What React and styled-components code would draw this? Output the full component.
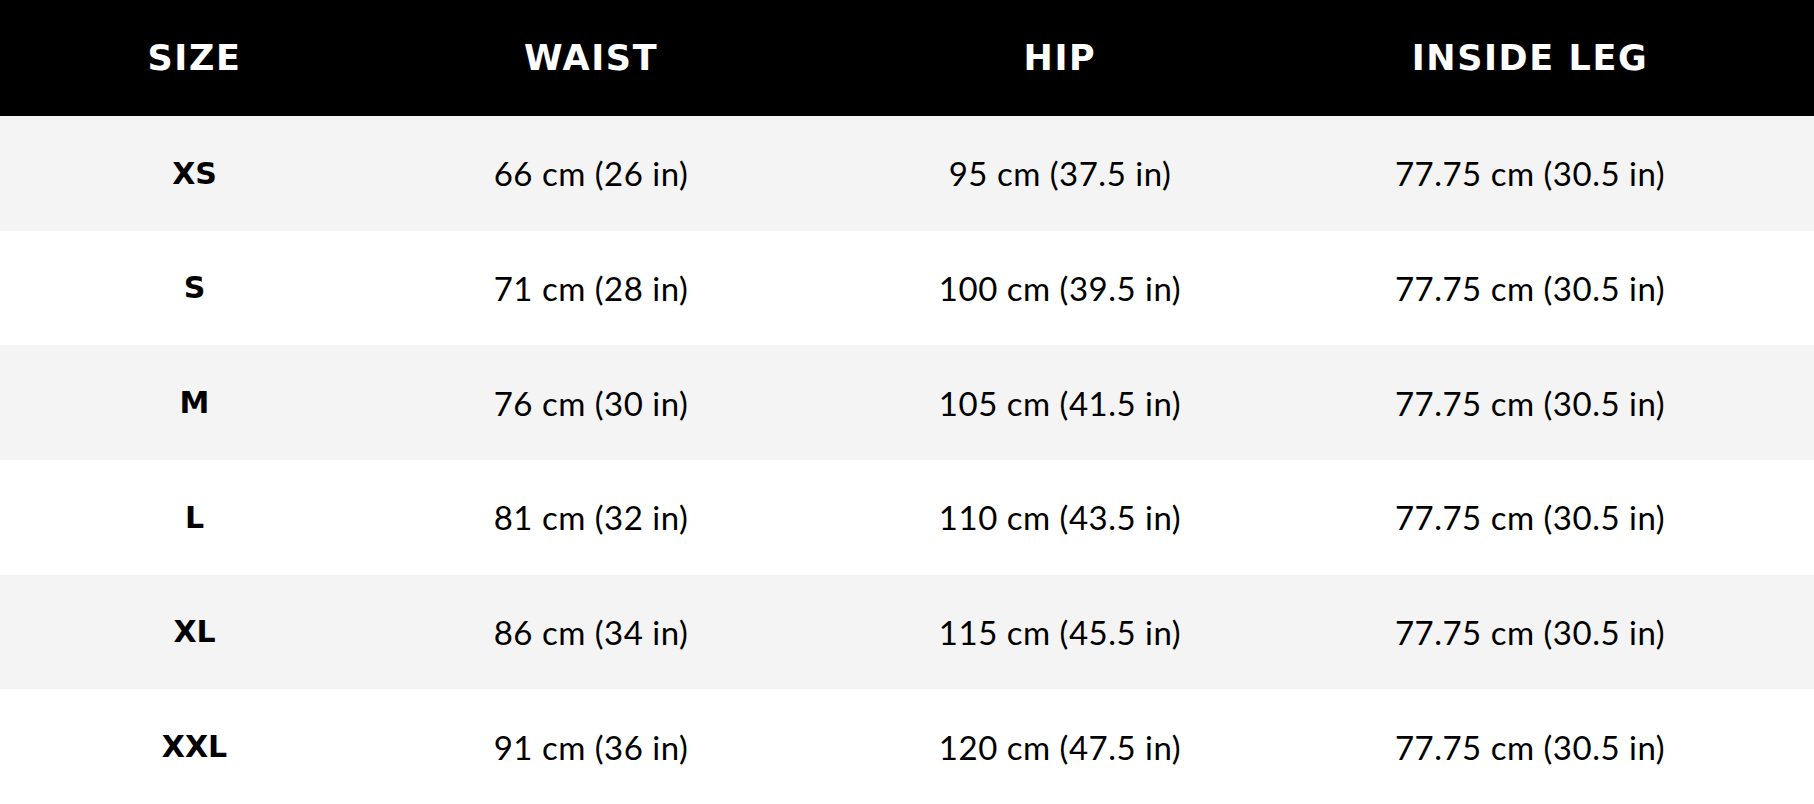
import React from 'react';
import styled, { createGlobalStyle } from 'styled-components';

const GlobalStyle = createGlobalStyle`
  html, body {
    margin: 0;
    padding: 0;
    background: #ffffff;
  }
  #root {
    height: 804px;
  }
`;

const Table = styled.div`
  display: grid;
  grid-template-rows: 116px repeat(6, 1fr);
  height: 804px;
  width: 100%;
  color: #000;
`;

const Row = styled.div`
  display: grid;
  grid-template-columns: 389fr 404fr 534fr 406fr;
  align-items: center;
  padding-right: 81px;
  background: ${(p) => (p.$head ? '#000000' : p.$shade ? '#f4f4f4' : '#ffffff')};
`;

const HeadCell = styled.div`
  text-align: center;
  color: #ffffff;
  font-family: 'DejaVu Sans', 'Liberation Sans', sans-serif;
  font-weight: 700;
  font-size: 35px;
  letter-spacing: 1.6px;
`;

const SizeCell = styled.div`
  text-align: center;
  font-family: 'DejaVu Sans', 'Liberation Sans', sans-serif;
  font-weight: 700;
  font-size: 30px;
`;

const Cell = styled.div`
  text-align: center;
  font-family: Lato, 'Open Sans', sans-serif;
  font-weight: 400;
  font-size: 33px;
  letter-spacing: 0.5px;
`;

const sizes = [
  { size: 'XS', waist: '66 cm (26 in)', hip: '95 cm (37.5 in)', leg: '77.75 cm (30.5 in)' },
  { size: 'S', waist: '71 cm (28 in)', hip: '100 cm (39.5 in)', leg: '77.75 cm (30.5 in)' },
  { size: 'M', waist: '76 cm (30 in)', hip: '105 cm (41.5 in)', leg: '77.75 cm (30.5 in)' },
  { size: 'L', waist: '81 cm (32 in)', hip: '110 cm (43.5 in)', leg: '77.75 cm (30.5 in)' },
  { size: 'XL', waist: '86 cm (34 in)', hip: '115 cm (45.5 in)', leg: '77.75 cm (30.5 in)' },
  { size: 'XXL', waist: '91 cm (36 in)', hip: '120 cm (47.5 in)', leg: '77.75 cm (30.5 in)' },
];

const App = () => {
  return (
    <>
      <GlobalStyle />
      <Table>
        <Row $head>
          <HeadCell>SIZE</HeadCell>
          <HeadCell>WAIST</HeadCell>
          <HeadCell>HIP</HeadCell>
          <HeadCell>INSIDE LEG</HeadCell>
        </Row>
        {sizes.map((s, i) => (
          <Row key={s.size} $shade={i % 2 === 0}>
            <SizeCell>{s.size}</SizeCell>
            <Cell>{s.waist}</Cell>
            <Cell>{s.hip}</Cell>
            <Cell>{s.leg}</Cell>
          </Row>
        ))}
      </Table>
    </>
  );
};

export default App;
